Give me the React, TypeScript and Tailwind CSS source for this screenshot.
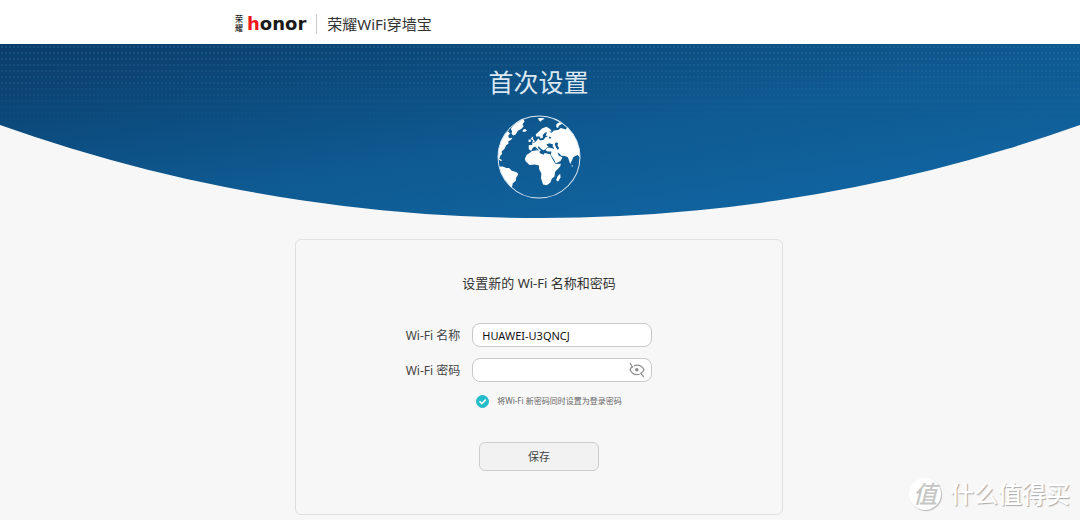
import { useState } from "react";

function HonorLogo() {
    return (
        <a href="#" aria-label="荣耀 honor" className="flex items-center gap-1">
            <span className="flex w-2 flex-col text-[8px] leading-[8px] font-medium text-[#222]">
                <span className="h-[9px]">荣</span>
                <span className="h-[9px]">耀</span>
            </span>
            <span className="font-['DejaVu_Sans',sans-serif] text-[18px] leading-5 font-bold text-[#1a1a1a]">
                <span className="text-[#f01818]">h</span>onor
            </span>
        </a>
    );
}

function Globe() {
    return (
        <svg viewBox="0 0 250 250" className="h-[84px] w-[84px]" aria-hidden="true">
            <defs>
                <clipPath id="globe">
                    <circle cx="125" cy="125" r="122" />
                </clipPath>
            </defs>
            <g clipPath="url(#globe)" fill="#fff">
                {/* North America */}
                <path d="M4 90 L14 68 L26 54 L34 49 L39 56 L33 62 L36 69 L46 68 L42 74 L33 79 L35 84 L27 91 L22 101 L14 109 L15 116 L10 121 L7 130 L16 135 L11 137 L3 131 L-4 120Z" />
                {/* Greenland and the arctic islands */}
                <path d="M41 42 L50 29 L66 18 L79 13 L82 20 L76 27 L79 34 L72 42 L62 47 L55 59 L48 61 L43 55 L45 48Z" />
                <path d="M77 44 L84 42 L89 46 L84 50 L76 50Z" />
                <path d="M122 9 L137 9 L142 12 L133 15 L131 20 L125 16Z" />
                <path d="M177 27 L187 21 L195 25 L184 32 L182 39 L176 36Z" />
                {/* South America */}
                <path d="M3 154 L17 153 L28 158 L36 158 L43 165 L60 171 L63 177 L57 187 L56 196 L47 203 L45 213 L40 224 L20 206 L5 178Z" />
                {/* British Isles */}
                <path d="M103 66 L108 64 L107 71 L113 79 L105 83 L107 75 L101 72Z" />
                <path d="M94 73 L101 73 L100 80 L94 80Z" />
                {/* Europe and Asia */}
                <path d="M94 99 L95 89 L105 89 L104 85 L113 81 L119 75 L123 69 L128 76 L139 74 L144 66 L151 64 L145 60 L149 52 L143 52 L136 60 L137 67 L130 70 L126 63 L117 65 L115 58 L124 50 L134 40 L147 35 L158 42 L163 48 L155 50 L163 53 L169 46 L182 45 L190 39 L205 43 L211 33 L238 59 L252 112 L247 126 L240 119 L233 122 L227 126 L218 146 L211 126 L202 122 L191 121 L187 116 L180 111 L184 121 L195 126 L189 137 L175 144 L170 133 L160 118 L162 109 L151 109 L144 104 L151 97 L162 98 L170 101 L167 94 L158 90 L149 97 L143 103 L138 105 L130 100 L124 92 L122 98 L131 106 L127 108 L118 98 L113 94 L106 98 L103 105 L98 106Z" />
                {/* Black and Caspian seas cut back out */}
                <path fill="#0e5991" d="M147 88 L156 84 L167 88 L165 94 L152 94Z" />
                <path fill="#0e5991" d="M175 81 L182 84 L180 91 L185 98 L181 104 L176 97 L172 88Z" />
                <path fill="#0e5991" d="M156 64 L162 67 L158 71 L154 69Z" />
                {/* Africa */}
                <path d="M98 112 L104 107 L122 105 L127 107 L127 113 L138 118 L142 113 L158 117 L165 131 L174 146 L190 145 L188 153 L173 169 L171 183 L163 190 L159 201 L148 209 L137 207 L131 188 L132 174 L125 160 L125 150 L113 147 L97 149 L85 138 L83 130 L88 119Z" />
                <path d="M180 183 L188 175 L189 185 L182 198 L176 194Z" />
                <path d="M114 104 L119 103 L118 106Z" />
                <path d="M222 148 L226 151 L223 155Z" />
            </g>
            <circle cx="125" cy="125" r="122" fill="none" stroke="#dbe8f2" strokeWidth="3" />
        </svg>
    );
}

function HiddenEye() {
    return (
        <svg viewBox="0 0 16 16" className="h-4 w-4" fill="none" stroke="currentColor" strokeLinecap="round" aria-hidden="true">
            <path d="M5.2 3.8C6 3.4 7 3.2 8 3.2c3.400 0 5.800 2.300 7 4.500c-.7 1.500-1.700 2.700-3 3.500M10.300 12.300c-4 1.200-7.500-1-9.300-4.500C1.500 6.600 2.300 5.600 3.200 4.800" strokeWidth="1.200" />
            <path d="M1.200 1.200L3.400 5M11.800 11.300L14.400 14.600" strokeWidth="1.200" />
            <circle cx="7.800" cy="7.700" r="1.800" fill="currentColor" stroke="none" />
        </svg>
    );
}

function Watermark() {
    return (
        <div className="pointer-events-none absolute right-[10px] bottom-[10px] flex items-center gap-[9px]">
            <span className="flex h-8 w-8 items-center justify-center rounded-full bg-white text-[24px] leading-8 font-medium text-[#c6c6c6] italic shadow-[1px_1px_1px_#bbb]">
                值
            </span>
            <span className="text-[24px] leading-8 font-medium text-white [text-shadow:1px_1px_1px_#aaa]">什么值得买</span>
        </div>
    );
}

export default function App() {
    const [name, setName] = useState("HUAWEI-U3QNCJ");
    const [password, setPassword] = useState("");
    const [visible, setVisible] = useState(false);
    const [sameAsLogin, setSameAsLogin] = useState(true);

    return (
        <div className="relative min-h-screen bg-[#f7f7f7] pb-[5px] font-['Noto_Sans','Noto_Sans_CJK_SC',sans-serif] text-[#444]">
            <header className="h-11 bg-white px-4">
                <div className="mx-auto flex h-full max-w-[610px] items-center gap-[10px] pt-1">
                    <HonorLogo />
                    <span className="h-5 w-px bg-[#ccc]" />
                    <span className="text-[15px] leading-5 text-[#333]">荣耀WiFi穿墙宝</span>
                </div>
            </header>

            <section className="relative h-[174px] bg-linear-to-br from-[#0a3c6a] via-[#0e5990] to-[#1269a8] [clip-path:ellipse(149.5%_1614px_at_50%_-1440px)]">
                {/* Dotted texture, strongest at the top */}
                <div className="absolute inset-0 bg-[radial-gradient(circle,rgba(70,140,175,0.25)_1px,transparent_1px)] bg-size-[4px_6px] mask-b-from-0% mask-b-to-50%" />
                <div className="relative flex flex-col items-center pt-[22px] pr-[3px]">
                    <h1 className="text-[25px] leading-8 font-normal text-[#dbe8f2]">首次设置</h1>
                    <div className="mt-[17px]">
                        <Globe />
                    </div>
                </div>
            </section>

            <main className="pt-[21px] pr-[18px] pl-4">
                <form
                    onSubmit={(e) => e.preventDefault()}
                    className="mx-auto flex max-w-[488px] flex-col items-center rounded-[6px] border border-[#e0e0e2] px-4 pt-[33px] pb-[43px]"
                >
                    <h2 className="text-[13px] leading-5 text-[#333]">设置新的 Wi-Fi 名称和密码</h2>

                    <div className="mt-[30px] grid grid-cols-[auto_180px] items-center gap-x-3 gap-y-[11px] pr-5 text-[12px]">
                        <label htmlFor="ssid" className="pt-[2px] text-right leading-[22px]">Wi-Fi 名称</label>
                        <input
                            id="ssid"
                            type="text"
                            value={name}
                            onChange={(e) => setName(e.target.value)}
                            className="h-6 w-full rounded-lg border border-[#c8c8c8] bg-white px-[9px] text-[11px] text-[#111] outline-none"
                        />
                        <label htmlFor="password" className="pt-[2px] text-right leading-[22px]">Wi-Fi 密码</label>
                        <div className="flex h-6 items-center rounded-lg border border-[#c8c8c8] bg-white pr-[6px]">
                            <input
                                id="password"
                                type={visible ? "text" : "password"}
                                value={password}
                                onChange={(e) => setPassword(e.target.value)}
                                className="min-w-0 flex-1 bg-transparent px-[9px] text-[11px] text-[#111] outline-none"
                            />
                            <button type="button" aria-label="显示密码" onClick={() => setVisible(!visible)} className="text-[#8c8c8c]">
                                <HiddenEye />
                            </button>
                        </div>
                        <label className="col-start-2 ml-1 flex items-center gap-2 text-[8px] leading-4 text-[#666]">
                            <span className="grid h-[13px] w-[13px]">
                                <input
                                    type="checkbox"
                                    checked={sameAsLogin}
                                    onChange={(e) => setSameAsLogin(e.target.checked)}
                                    className="peer col-start-1 row-start-1 h-[13px] w-[13px] appearance-none rounded-full border border-[#bbb] checked:border-[#26bccb] checked:bg-[#26bccb]"
                                />
                                <svg viewBox="0 0 13 13" className="pointer-events-none col-start-1 row-start-1 h-[13px] w-[13px] opacity-0 peer-checked:opacity-100" fill="none" stroke="#fff" strokeWidth="1.500" aria-hidden="true">
                                    <path d="M3.500 6.300L5.800 8.600L9.800 4.600" />
                                </svg>
                            </span>
                            将Wi-Fi 新密码同时设置为登录密码
                        </label>
                    </div>

                    <button type="submit" className="mt-[33px] h-[29px] w-[120px] rounded-[6px] border border-[#ccc] bg-[#f2f2f2] pt-[2px] text-[11px] text-[#444]">
                        保存
                    </button>
                </form>
            </main>

            <Watermark />
        </div>
    );
}
